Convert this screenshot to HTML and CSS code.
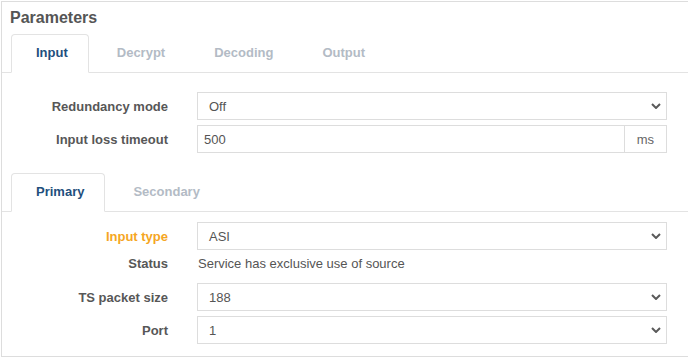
FILE: index.html
```html
<!DOCTYPE html>
<html lang="en">
<head>
  <meta charset="UTF-8">
  <meta name="viewport" content="width=device-width, initial-scale=1.0">
  <title>Parameters</title>
  <link rel="stylesheet" href="styles.css">
</head>
<body>
  <div class="panel">
    <!-- Cabecera -->
    <div class="panel-title">Parameters</div>

    <!-- Pestañas principales -->
    <ul class="tabs">
      <li class="tab active">Input</li>
      <li class="tab">Decrypt</li>
      <li class="tab">Decoding</li>
      <li class="tab">Output</li>
    </ul>

    <div class="form form-top">
      <div class="form-row">
        <label class="label">Redundancy mode</label>
        <div class="select">
          <span>Off</span>
          <svg class="chevron" width="10" height="6" viewBox="0 0 10 6"><polyline points="1,1 5,5 9,1" /></svg>
        </div>
      </div>
      <div class="form-row">
        <label class="label">Input loss timeout</label>
        <div class="input-group">
          <div class="input">500</div>
          <div class="addon">ms</div>
        </div>
      </div>
    </div>

    <!-- Pestañas de fuente -->
    <ul class="tabs sub-tabs">
      <li class="tab active">Primary</li>
      <li class="tab">Secondary</li>
    </ul>

    <div class="form form-bottom">
      <div class="form-row">
        <label class="label label-warning">Input type</label>
        <div class="select">
          <span>ASI</span>
          <svg class="chevron" width="10" height="6" viewBox="0 0 10 6"><polyline points="1,1 5,5 9,1" /></svg>
        </div>
      </div>
      <div class="form-row status-row">
        <label class="label">Status</label>
        <div class="static-text">Service has exclusive use of source</div>
      </div>
      <div class="form-row">
        <label class="label">TS packet size</label>
        <div class="select">
          <span>188</span>
          <svg class="chevron" width="10" height="6" viewBox="0 0 10 6"><polyline points="1,1 5,5 9,1" /></svg>
        </div>
      </div>
      <div class="form-row">
        <label class="label">Port</label>
        <div class="select">
          <span>1</span>
          <svg class="chevron" width="10" height="6" viewBox="0 0 10 6"><polyline points="1,1 5,5 9,1" /></svg>
        </div>
      </div>
    </div>
  </div>
</body>
</html>
```

FILE: styles.css
```css
/* Estilos generales */
html, body {
  overflow: hidden;
}

body {
  margin: 0;
  padding: 0;
  font-family: "Liberation Sans", Arial, sans-serif;
  font-size: 13px;
  color: #555;
  background-color: #FFF;
}

/* Panel */
.panel {
  box-sizing: border-box;
  width: 700px;
  margin: 1px 0 0 1px;
  border: 1px solid #DDD;
  padding-bottom: 12px;
}

.panel-title {
  padding: 5px 8px;
  font-size: 16px;
  line-height: 22px;
  font-weight: bold;
  color: #555;
}

/* Pestañas */
.tabs {
  display: flex;
  list-style: none;
  margin: 0;
  padding: 0 0 0 9px;
  border-bottom: 1px solid #E3E3E3;
}

.tab {
  padding: 0 20px 1px 24px;
  margin-right: 3px;
  margin-bottom: -1px;
  line-height: 36px;
  border: 1px solid transparent;
  border-radius: 4px 4px 0 0;
  font-weight: bold;
  color: #B3BBC5;
}

.tab.active {
  color: #1F4F7D;
  background-color: #FFF;
  border-color: #E3E3E3 #E3E3E3 #FFF;
}

.sub-tabs {
  margin-top: 20px;
}

/* Formularios */
.form {
  display: flex;
  flex-direction: column;
  gap: 5px;
  padding: 0 33px 0 9px;
}

.form-top {
  padding-top: 19px;
}

.form-bottom {
  padding-top: 10px;
}

.form-row {
  display: grid;
  grid-template-columns: 157px 1fr;
  column-gap: 29px;
  align-items: center;
}

.label {
  text-align: right;
  font-weight: bold;
  color: #575757;
}

.label-warning {
  color: #F5A623;
}

.select,
.input,
.addon {
  box-sizing: border-box;
  height: 28px;
  border: 1px solid #DDD;
  background-color: #FFF;
  color: #555;
  font-size: 13px;
}

.select {
  display: flex;
  align-items: center;
  justify-content: space-between;
  padding: 0 5px 0 11px;
}

.chevron polyline {
  fill: none;
  stroke: #5A5A5A;
  stroke-width: 2;
}

.input-group {
  display: flex;
}

.input {
  flex: 1;
  display: flex;
  align-items: center;
  padding: 0 6px;
}

.addon {
  display: flex;
  align-items: center;
  padding: 0 12px;
  border-left: none;
  color: #666;
}

/* Fila de estado */
.status-row {
  align-items: start;
  line-height: 17px;
  padding-bottom: 6px;
}

.static-text {
  padding-left: 1px;
}
```
